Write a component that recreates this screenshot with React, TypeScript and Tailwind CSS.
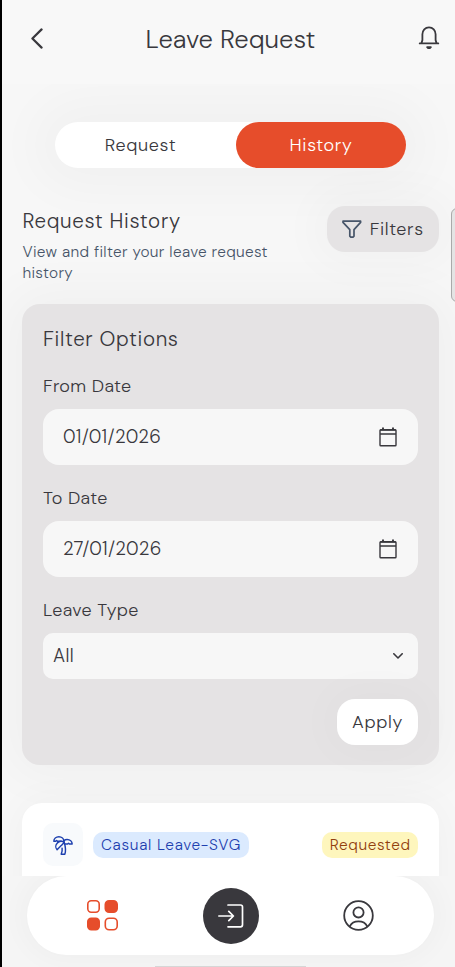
import { useState } from 'react'
import type { ReactNode } from 'react'
import clsx from 'clsx'

const ChevronLeft = () => (
  <svg width="12" height="21" viewBox="0 0 12 21" fill="none" stroke="currentColor" strokeWidth="2.2" strokeLinecap="round" strokeLinejoin="round">
    <path d="M10.6 1.4 1.4 10.5l9.2 9.1" />
  </svg>
)

const BellIcon = () => (
  <svg width="22" height="24" viewBox="0 0 22 24" fill="none" stroke="currentColor" strokeWidth="1.8" strokeLinecap="round" strokeLinejoin="round">
    <path d="M1.7 17.4h18.6M3.4 17.2l1-3.1V8.3C4.4 4.3 7.2 1.3 11 1.3s6.6 3 6.6 7v5.8l1 3.1" />
    <path d="M9.1 21.2h3.8l-1 .9h-1.8z" />
  </svg>
)

const FunnelIcon = () => (
  <svg width="20" height="19" viewBox="0 0 20 19" fill="none" stroke="currentColor" strokeWidth="1.7" strokeLinejoin="round">
    <path d="M1 1.2h17.6v1.2L12 9.6v6.6l-1 1H8.8l-1-1V9.6L1 2.4z" />
  </svg>
)

const CalendarIcon = () => (
  <svg width="18" height="20" viewBox="0 0 18 20" fill="none" stroke="currentColor" strokeWidth="1.4">
    <rect x="1" y="2.7" width="16" height="16" rx=".8" />
    <path d="M1 3.1h16M1 7h16" />
    <path d="M4 .6v2.2M14 .6v2.2" strokeWidth="1.9" />
  </svg>
)

const PalmIcon = () => (
  <svg width="22" height="22" viewBox="0 0 24 24" fill="none" stroke="currentColor" strokeWidth="1.6" strokeLinecap="round" strokeLinejoin="round">
    <path d="M13 8c0-2.76-2.46-5-5.5-5S2 5.24 2 8h2l1-1 1 1h4" />
    <path d="M13 7.14A5.82 5.82 0 0 1 16.5 6c3.04 0 5.5 2.24 5.5 5h-3l-1-1-1 1h-3" />
    <path d="M5.89 9.71c-2.15 2.15-2.3 5.47-.35 7.43l4.24-4.25.7-.7.71-.71 2.12-2.12c-1.95-1.96-5.27-1.8-7.42.35" />
    <path d="M11 15.5c.5 2.5-.17 4.5-1 6.5h4c2-5.5-.5-12-1-14" />
  </svg>
)

const GridIcon = () => (
  <svg width="31" height="31" viewBox="0 0 31 31" fill="none" stroke="#e64d2b" strokeWidth="1.6">
    <rect x=".8" y=".8" width="11.4" height="11.4" rx="3.4" />
    <rect x="18.3" y=".8" width="11.9" height="11.4" rx="3.8" fill="#e64d2b" />
    <rect x=".8" y="18.3" width="11.4" height="11.4" rx="3.4" fill="#e64d2b" />
    <rect x="18.3" y="18.3" width="11.9" height="11.4" rx="3.8" />
  </svg>
)

const EnterIcon = () => (
  <svg width="26" height="24" viewBox="0 0 26 24" fill="none" stroke="#fff" strokeWidth="1.7" strokeLinecap="round" strokeLinejoin="round">
    <path d="M10 1h12.5a2 2 0 0 1 2 2v17.8a2 2 0 0 1-2 2H10" />
    <path d="M.8 12h14.4M10.8 7.4l4.6 4.6-4.6 4.6" />
  </svg>
)

const UserIcon = () => (
  <svg width="31" height="31" viewBox="0 0 31 31" fill="none" stroke="currentColor" strokeWidth="1.8" strokeLinecap="round">
    <circle cx="15.5" cy="15.5" r="14.3" />
    <circle cx="15.5" cy="12.4" r="5.1" />
    <path d="M6.9 26.2c1.5-3.2 4.6-4.9 8.6-4.9s7.1 1.7 8.6 4.9" />
  </svg>
)

const TABS = [
  { id: 'request', label: 'Request' },
  { id: 'history', label: 'History' },
]

const Field = ({ label, children }: { label: string; children: ReactNode }) => (
  <div>
    <p className="h-6 text-[18px] leading-6 tracking-[0.35px]">{label}</p>
    {children}
  </div>
)

const DateInput = ({ value }: { value: string }) => (
  <button className="mt-[11px] flex h-14 w-full items-center justify-between rounded-[16px] bg-[#f7f7f7] pl-5 pr-[21px]">
    <span className="pt-0.5 text-[18.5px] tracking-[0.3px]">{value}</span>
    <CalendarIcon />
  </button>
)

const App = () => {
  const [tab, setTab] = useState('history')

  return (
    <div className="flex h-[967px] w-full flex-col overflow-hidden border-l-2 border-black bg-[#f7f7f7] font-['DM_Sans','Inter',sans-serif] font-light text-[#39383d]">
      <header className="relative z-10 flex h-[84px] shrink-0 items-start justify-between bg-[#f8f8f8] pl-[29px] pr-[15px] pt-[24px]">
        <button className="pt-1" aria-label="Back">
          <ChevronLeft />
        </button>
        <h1 className="text-[25.7px] leading-[31px]">Leave Request</h1>
        <button className="pt-[2px]" aria-label="Notifications">
          <BellIcon />
        </button>
      </header>

      <main className="relative h-[792px] shrink-0 overflow-hidden pl-[20.4px] pr-4 pt-[38px]">
        <div className="ml-[32.6px] flex h-[46px] w-[351px] rounded-full bg-white shadow-[0_0_50px_22px_rgba(0,0,0,0.028)]">
          {TABS.map(item => (
            <button
              key={item.id}
              onClick={() => setTab(item.id)}
              className={clsx(
                'h-full rounded-full text-[18px] tracking-[0.65px]',
                item.id === 'request' ? 'w-[181px] pr-[10px]' : 'w-[170px]',
                tab === item.id && 'bg-[#e64d2b] text-white',
              )}
            >
              {item.label}
            </button>
          ))}
        </div>

        <div className="mt-[38px] flex h-[98px] w-[416.4px] justify-between">
          <div className="w-[265px]">
            <h2 className="pt-px text-[20.5px] leading-[29px] tracking-[0.68px]">Request History</h2>
            <p className="mt-[5.5px] text-[15.4px] leading-[21.5px] tracking-[0.35px] text-[#475569]">
              View and filter your leave request history
            </p>
          </div>
          <button className="flex h-[46px] w-28 items-center gap-2 rounded-[18px] bg-[#e5e3e4] pl-[15px] text-[18px] tracking-[0.6px] shadow-[0_0_40px_16px_rgba(0,0,0,0.022)]">
            <span className="shrink-0 text-[#475569]">
              <FunnelIcon />
            </span>
            Filters
          </button>
        </div>

        <section className="h-[461px] w-[416.4px] rounded-[18px] bg-[#e5e3e4] px-[20.6px] pt-[21px] shadow-[0_0_50px_14px_rgba(0,0,0,0.03)]">
          <h3 className="text-[20.5px] leading-[29px] tracking-[0.65px]">Filter Options</h3>
          <div className="mt-[20px] flex flex-col gap-[21px]">
            <Field label="From Date">
              <DateInput value="01/01/2026" />
            </Field>
            <Field label="To Date">
              <DateInput value="27/01/2026" />
            </Field>
            <Field label="Leave Type">
              <button className="mt-[11px] flex h-[46px] w-full items-center justify-between rounded-[10px] bg-[#f7f7f7] pl-[10px] pr-[15px] text-[18.5px] tracking-[0.4px]">
                <span className="pt-0.5">All</span>
                <svg width="10" height="6" viewBox="0 0 10 6" fill="none" stroke="currentColor" strokeWidth="1.6" strokeLinecap="round" strokeLinejoin="round">
                  <path d="m.8.8 4.2 4.2L9.2.8" />
                </svg>
              </button>
            </Field>
          </div>
          <div className="mt-5 flex justify-end">
            <button className="h-[46px] w-[81.4px] rounded-[18px] bg-white text-[18px] tracking-[0.65px] shadow-[0_0_40px_12px_rgba(0,0,0,0.018)]">
              Apply
            </button>
          </div>
        </section>

        <article className="mt-[38px] h-[150px] w-[416.4px] rounded-t-[20px] bg-white px-[20.6px] pt-5 shadow-[0_0_40px_rgba(0,0,0,0.035)]">
          <div className="flex h-[43px] items-center">
            <div className="flex h-[43px] w-10 items-center justify-center rounded-[10px] bg-[#f8fafc] text-[#1e40af]">
              <PalmIcon />
            </div>
            <span className="ml-[10px] flex h-[26px] w-[156px] items-center justify-center whitespace-nowrap rounded-[10px] bg-[#dbeafe] pt-0.5 text-[15.4px] tracking-[0.7px] text-[#1e40af]">
              Casual Leave-SVG
            </span>
            <span className="ml-auto flex h-[26px] w-24 items-center justify-center rounded-[10px] bg-[#fef6bd] pt-0.5 text-[15.4px] tracking-[0.65px] text-[#92400e]">
              Requested
            </span>
          </div>
        </article>

        <div className="absolute -right-2 top-[124px] h-[94px] w-3 rounded-[6px] border border-[#aaa] bg-[#e4e4e4]" />
      </main>

      <nav className="relative h-[91px] shrink-0 overflow-hidden bg-[#f5f5f5] pl-[25px]">
        <div className="flex h-[79px] w-[407px] items-center rounded-full bg-white pl-[60px] shadow-[0_0_24px_8px_rgba(0,0,0,0.025)]">
          <button aria-label="Dashboard">
            <GridIcon />
          </button>
          <button className="ml-[84.5px] flex size-14 items-center justify-center rounded-full bg-[#39383d]" aria-label="Check in">
            <EnterIcon />
          </button>
          <button className="ml-[84px]" aria-label="Profile">
            <UserIcon />
          </button>
        </div>
        <div className="absolute bottom-0 left-[153px] h-px w-[151px] bg-[#d6d6d6]" />
      </nav>
    </div>
  )
}

export default App
